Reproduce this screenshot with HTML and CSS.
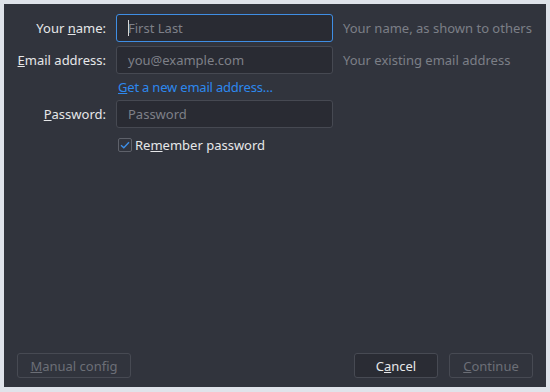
FILE: index.html
```html
<!DOCTYPE html>
<html lang="en">
<head>
  <meta charset="UTF-8">
  <title>Account Setup</title>
  <link rel="stylesheet" href="styles.css">
</head>
<body>
  <div class="panel">
    <form class="setup-form">
      <label class="field-label" for="name">Your <u>n</u>ame:</label>
      <div class="input focused"><span class="caret"></span><span class="placeholder">First Last</span></div>
      <span class="hint">Your name, as shown to others</span>

      <label class="field-label" for="email"><u>E</u>mail address:</label>
      <div class="input"><span class="placeholder">you@example.com</span></div>
      <span class="hint">Your existing email address</span>

      <span></span>
      <a class="link" href="#"><u>G</u>et a new email address…</a>
      <span></span>

      <label class="field-label" for="password"><u>P</u>assword:</label>
      <div class="input"><span class="placeholder">Password</span></div>
      <span></span>

      <span></span>
      <label class="check">
        <span class="box">
          <svg width="10" height="8" viewBox="0 0 10 8"><path d="M1 4.2 L3.8 6.8 L9 1.2" fill="none" stroke="#3d8ee6" stroke-width="1.4"/></svg>
        </span>
        <span>Re<u>m</u>ember password</span>
      </label>
      <span></span>
    </form>

    <div class="buttons">
      <button class="btn disabled" type="button"><u>M</u>anual config</button>
      <div class="spacer"></div>
      <button class="btn primary" type="button">C<u>a</u>ncel</button>
      <button class="btn disabled" type="button"><u>C</u>ontinue</button>
    </div>
  </div>
</body>
</html>
```

FILE: styles.css
```css
body {
  margin: 0;
  background-color: #dfe3ea;
  font-family: "Noto Sans", sans-serif;
  font-size: 13px;
}

.panel {
  margin: 4px 4px 5px 4px;
  height: 383px;
  background-color: #31343d;
  display: flex;
  flex-direction: column;
  box-sizing: border-box;
  padding: 10px 0 9px 0;
}

.setup-form {
  display: grid;
  grid-template-columns: 102px 217px auto;
  grid-template-rows: 28px 28px 18px 28px 26px;
  column-gap: 10px;
  row-gap: 4px;
  align-items: center;
}

.field-label {
  text-align: right;
  color: #e6e7e9;
}

.hint {
  color: #7c7f87;
}

.input {
  height: 28px;
  box-sizing: border-box;
  border: 1px solid #464952;
  border-radius: 3px;
  background-color: #292b33;
  display: flex;
  align-items: center;
  padding-left: 11px;
}

.input.focused {
  border-color: #3f8ee4;
}

.placeholder {
  color: #7e8088;
}

.caret {
  width: 1px;
  height: 16px;
  background-color: #d8d9db;
  margin-right: -1px;
}

.link {
  color: #2d88ee;
  text-decoration: none;
  padding-left: 2px;
  letter-spacing: -0.2px;
}

.check {
  display: flex;
  align-items: center;
  gap: 3px;
  color: #e6e7e9;
  padding-left: 2px;
}

.box {
  width: 12px;
  height: 12px;
  border: 1px solid #5e616a;
  border-radius: 2px;
  display: flex;
  align-items: center;
  justify-content: center;
}

.buttons {
  margin-top: auto;
  display: flex;
  gap: 11px;
  padding: 0 13px;
}

.spacer {
  flex: 1;
}

.btn {
  height: 25px;
  width: 84px;
  border: 1px solid #474a53;
  border-radius: 3px;
  background-color: #31343d;
  font-family: "Noto Sans", sans-serif;
  font-size: 13px;
  padding: 0;
}

.btn:first-child {
  width: 114px;
}

.btn.primary {
  background-color: #2a2c34;
  color: #e6e7e9;
}

.btn.disabled {
  color: #6c6f77;
}
```
